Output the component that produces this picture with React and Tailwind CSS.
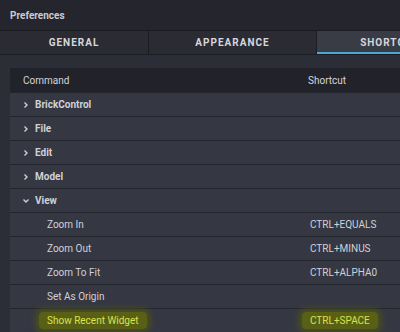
import React from 'react';

const rows = [
  { label: 'BrickControl', group: true, open: false },
  { label: 'File', group: true, open: false },
  { label: 'Edit', group: true, open: false },
  { label: 'Model', group: true, open: false },
  { label: 'View', group: true, open: true },
  { label: 'Zoom In', shortcut: 'CTRL+EQUALS' },
  { label: 'Zoom Out', shortcut: 'CTRL+MINUS' },
  { label: 'Zoom To Fit', shortcut: 'CTRL+ALPHA0' },
  { label: 'Set As Origin', shortcut: '' },
  { label: 'Show Recent Widget', shortcut: 'CTRL+SPACE', marked: true },
];

const Chevron = ({ open }) => (
  <svg width="8" height="8" viewBox="0 0 8 8" className="shrink-0">
    {open ? (
      <path d="M1.5 2.5 L4 5 L6.5 2.5" fill="none" stroke="#cfd0d6" strokeWidth="1.4" />
    ) : (
      <path d="M2.5 1.5 L5 4 L2.5 6.5" fill="none" stroke="#cfd0d6" strokeWidth="1.4" />
    )}
  </svg>
);

// yellow marker stroke over a piece of text
const Marked = ({ children }) => (
  <span className="-mx-[8px] rounded-[4px] bg-[#596016] px-[8px] py-[3px] text-[#dbe24a] shadow-[0_0_6px_3px_#4c5218]">
    {children}
  </span>
);

export default function App() {
  const tabs = [
    { name: 'GENERAL', w: 'w-[149px]' },
    { name: 'APPEARANCE', w: 'w-[168px]' },
    { name: 'SHORTCUTS', w: 'w-[154px]', active: true },
  ];

  return (
    <div
      className="w-[400px] h-[332px] overflow-hidden bg-[#2c2e37] flex flex-col"
      style={{ fontFamily: 'Roboto, "Liberation Sans", sans-serif' }}
    >
      {/* title bar */}
      <div className="h-[30px] shrink-0 bg-[#25252d] px-[10px] flex items-center text-[10px] font-bold text-[#cacbd0]">
        Preferences
      </div>

      {/* tabs */}
      <div className="h-[25px] shrink-0 flex border-y border-[#1b1c21] bg-[#2a2b33]">
        {tabs.map((t) => (
          <div
            key={t.name}
            className={`${t.w} shrink-0 relative flex items-center justify-center border-r border-[#1b1c21] text-[10px] font-bold tracking-[1px] text-[#d6d7dc] ${
              t.active ? 'bg-[#3a3c45]' : ''
            }`}
          >
            {t.name}
            {t.active && <div className="absolute left-0 right-0 bottom-0 h-[2px] bg-[#4ba7d3]" />}
          </div>
        ))}
      </div>

      {/* table */}
      <div className="pt-[13px] pl-[10px] flex-1">
        <div className="h-[24px] bg-[#22232a] flex items-center text-[10px] text-[#d4d5da]">
          <div className="w-[298px] pl-[13px]">Command</div>
          <div>Shortcut</div>
        </div>
        {rows.map((r) => (
          <div
            key={r.label}
            className="h-[24px] bg-[#353843] border-t border-[#23252c] flex items-center text-[10px] text-[#d0d1d6]"
          >
            {r.group ? (
              <div className="w-[298px] pl-[12px] flex items-center gap-[5px] font-bold">
                <Chevron open={r.open} />
                {r.label}
              </div>
            ) : (
              <div className="w-[298px] pl-[37px]">
                {r.marked ? <Marked>{r.label}</Marked> : r.label}
              </div>
            )}
            <div className="pl-[2px]">
              {r.marked ? <Marked>{r.shortcut}</Marked> : r.shortcut}
            </div>
          </div>
        ))}
      </div>
    </div>
  );
}
